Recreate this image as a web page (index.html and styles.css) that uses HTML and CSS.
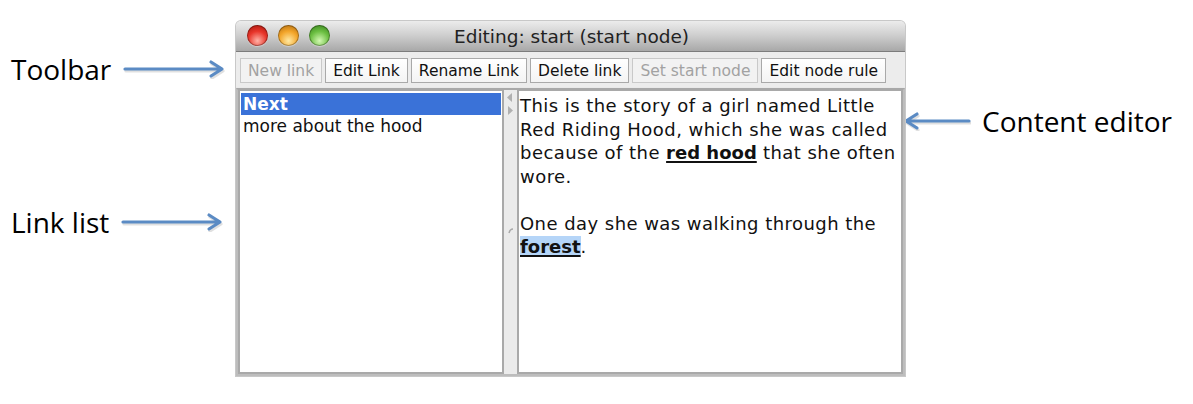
FILE: index.html
```html
<!DOCTYPE html>
<html>
<head>
<meta charset="utf-8">
<link rel="stylesheet" href="styles.css">
</head>
<body>
<div class="canvas">
  <div class="callout callout-toolbar">
    <span class="callout-label">Toolbar</span>
    <svg class="arrow" width="104" height="20" viewBox="0 0 104 20"><g class="arrow-shadow" transform="translate(1,2)"><path d="M2 10 H98 M88 3 L99 10 L88 17"/></g><path d="M2 10 H98 M88 3 L99 10 L88 17"/></svg>
  </div>
  <div class="callout callout-list">
    <span class="callout-label">Link list</span>
    <svg class="arrow" width="104" height="20" viewBox="0 0 104 20"><g class="arrow-shadow" transform="translate(1,2)"><path d="M2 10 H98 M88 3 L99 10 L88 17"/></g><path d="M2 10 H98 M88 3 L99 10 L88 17"/></svg>
  </div>
  <div class="callout callout-editor">
    <svg class="arrow" width="68" height="20" viewBox="0 0 68 20"><g class="arrow-shadow" transform="translate(1,2)"><path d="M66 10 H4 M14 3 L3 10 L14 17"/></g><path d="M66 10 H4 M14 3 L3 10 L14 17"/></svg>
    <span class="callout-label">Content editor</span>
  </div>

  <div class="window">
    <div class="titlebar">
      <div class="lights">
        <span class="light red"></span>
        <span class="light yellow"></span>
        <span class="light green"></span>
      </div>
      <div class="title">Editing: start (start node)</div>
    </div>
    <div class="toolbar">
      <button class="btn disabled">New link</button>
      <button class="btn">Edit Link</button>
      <button class="btn">Rename Link</button>
      <button class="btn">Delete link</button>
      <button class="btn disabled">Set start node</button>
      <button class="btn">Edit node rule</button>
    </div>
    <div class="content">
      <div class="linklist">
        <div class="row selected">Next</div>
        <div class="row">more about the hood</div>
      </div>
      <div class="divider">
        <svg class="div-arrows" width="10" height="26" viewBox="0 0 10 26"><path d="M7 2 L2 6.5 L7 11 Z" fill="#b0b0b0"/><path d="M3 15 L8 19.5 L3 24 Z" fill="#b0b0b0"/></svg>
        <svg class="div-grip" width="8" height="8" viewBox="0 0 8 8"><path d="M2 6 Q3 2 6 2" stroke="#a8a8a8" stroke-width="1.5" fill="none"/></svg>
      </div>
      <div class="editor">
        <p>This is the story of a girl named Little Red Riding Hood, which she was called because of the <span class="link">red hood</span> that she often wore.</p>
        <p>One day she was walking through the <span class="link sel">forest</span>.</p>
      </div>
    </div>
  </div>
</div>
</body>
</html>
```
FILE: styles.css
```css
html, body {
  margin: 0;
  padding: 0;
  background: #ffffff;
}
.canvas {
  position: relative;
  width: 1193px;
  height: 404px;
  overflow: hidden;
}
.callout {
  position: absolute;
  display: flex;
  align-items: center;
  font-family: "Open Sans", "Lato", sans-serif;
  font-size: 28px;
  color: #000;
}
.callout-toolbar { left: 11px; top: 50px; gap: 12px; }
.callout-list { left: 11px; top: 203px; gap: 12px; }
.callout-editor { left: 903px; top: 102px; gap: 11px; }
.arrow path {
  stroke: #5b8bc4;
  stroke-width: 3.2;
  fill: none;
  stroke-linecap: round;
  stroke-linejoin: round;
}
.arrow .arrow-shadow path {
  stroke: rgba(0,0,0,0.12);
}

.window {
  position: absolute;
  left: 236px;
  top: 21px;
  width: 669px;
  background: #e9e9e9;
  border-radius: 5px 5px 0 0;
  box-shadow: 0 0 0 1px #c8c8c8;
  font-family: "DejaVu Sans", "Verdana", sans-serif;
}
.titlebar {
  height: 30px;
  border-radius: 5px 5px 0 0;
  background: linear-gradient(#ececec, #d0d0d0 45%, #a8a8a8);
  border-bottom: 1px solid #7c7c7c;
  position: relative;
  display: flex;
  align-items: center;
  justify-content: center;
}
.lights {
  position: absolute;
  left: 11px;
  top: 4px;
  display: flex;
  gap: 10px;
}
.light {
  width: 21px;
  height: 21px;
  border-radius: 50%;
  box-shadow: inset 0 0 0 1px rgba(0,0,0,0.3), 0 1px 1px rgba(255,255,255,0.4);
}
.light.red { background: radial-gradient(circle at 50% 75%, #ffb3a8, #e8352a 50%, #9c1108); }
.light.yellow { background: radial-gradient(circle at 50% 75%, #ffe9a4, #f3a52a 50%, #a8640a); }
.light.green { background: radial-gradient(circle at 50% 75%, #d4f8b4, #6cbf42 50%, #2f7a16); }
.title {
  font-size: 18.5px;
  color: #222;
  padding-top: 1px;
  padding-left: 2px;
}
.toolbar {
  display: flex;
  gap: 3px;
  padding: 6px 4px 4px 4px;
  background: #ececec;
  height: 25px;
}
.btn {
  font-family: "DejaVu Sans", "Verdana", sans-serif;
  font-size: 15.5px;
  height: 25px;
  padding: 0 7px;
  background: linear-gradient(#ffffff, #f4f4f4);
  border: 1px solid #a9a9a9;
  border-radius: 0;
  color: #111;
  margin: 0;
}
.btn.disabled {
  color: #a2a2a2;
  background: #f2f2f2;
  border-color: #c9c9c9;
}
.content {
  display: flex;
  margin-top: 1px;
  height: 288px;
  border: 2px solid #bdbdbd;
  border-top-color: #a8a8a8;
  background: #ececec;
  box-sizing: border-box;
}
.linklist {
  width: 260px;
  background: #fff;
  border: 2px solid #a9a9a9;
  border-top-width: 1px;
  padding: 2px 1px;
  font-size: 17px;
  color: #111;
}
.row {
  height: 22px;
  line-height: 22px;
  padding-left: 2px;
}
.row.selected {
  background: #3a72d8;
  color: #fff;
  font-weight: bold;
}
.divider {
  width: 13px;
  background: #ebebeb;
  position: relative;
}
.div-arrows {
  position: absolute;
  left: 1px;
  top: 1px;
}
.div-grip {
  position: absolute;
  left: 3px;
  top: 137px;
}
.editor {
  flex: 1;
  background: #fff;
  border: 2px solid #a9a9a9;
  border-top-width: 1px;
  padding: 3px 1px;
  font-size: 18px;
  letter-spacing: 0.45px;
  line-height: 23.5px;
  color: #111;
}
.editor p {
  margin: 0 0 23.5px 0;
}
.link {
  font-weight: bold;
  letter-spacing: 0;
  text-decoration: underline;
  text-underline-offset: 2px;
  text-decoration-thickness: 1.5px;
}
.link.sel {
  background: #b5d5f8;
}
```
